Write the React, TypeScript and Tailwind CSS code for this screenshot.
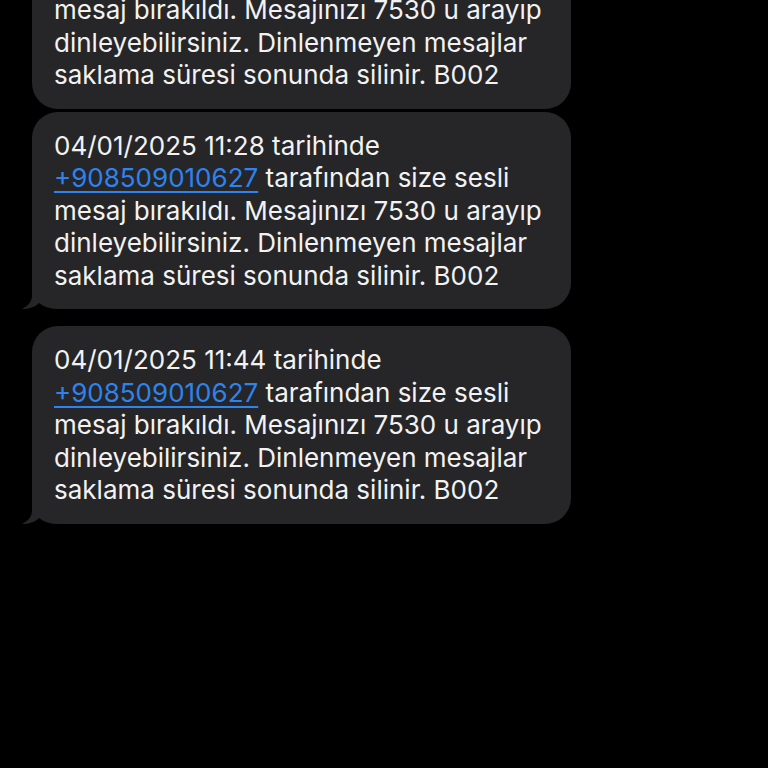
import React from 'react'

type Msg = {
  time: string
  tail: boolean
  gapAfter: number
}

const MESSAGES: Msg[] = [
  { time: '04/01/2025 11:12', tail: false, gapAfter: 3 },
  { time: '04/01/2025 11:28', tail: true, gapAfter: 17 },
  { time: '04/01/2025 11:44', tail: true, gapAfter: 0 },
]

function Tail() {
  return (
    <svg
      className="absolute left-[-11px] bottom-0"
      width="34"
      height="30"
      viewBox="0 0 34 30"
      fill="#262628"
    >
      <path d="M11 0 L11 16 C11 23 7 27 1 30 C8 30 14 28 18 24 C22 27 26 29 34 30 L34 0 Z" />
    </svg>
  )
}

function Bubble({ msg }: { msg: Msg }) {
  return (
    <div
      className={`relative w-[539px] rounded-[26px] bg-[#262628] pl-[22px] pr-4 pt-[18px] pb-[17px] text-[26px] leading-[32.5px] text-[#f2f2f2] ${
        msg.gapAfter === 17 ? 'mb-[17px]' : msg.gapAfter === 3 ? 'mb-[3px]' : ''
      }`}
      style={{ fontFamily: 'Inter, "Noto Sans", sans-serif' }}
    >
      {msg.tail && <Tail />}
      <div className="relative">
        <div>{msg.time} tarihinde</div>
        <div>
          <span className="text-[#2e83ee] underline decoration-[1.5px] underline-offset-[4px]">+908509010627</span>{' '}
          tarafından size sesli
        </div>
        <div>mesaj bırakıldı. Mesajınızı 7530 u arayıp</div>
        <div>dinleyebilirsiniz. Dinlenmeyen mesajlar</div>
        <div>saklama süresi sonunda silinir. B002</div>
      </div>
    </div>
  )
}

export default function App() {
  return (
    <div className="h-[768px] w-[768px] overflow-hidden bg-black">
      <div className="-mt-[89px] flex flex-col pl-8">
        {MESSAGES.map(m => (
          <Bubble key={m.time} msg={m} />
        ))}
      </div>
    </div>
  )
}
